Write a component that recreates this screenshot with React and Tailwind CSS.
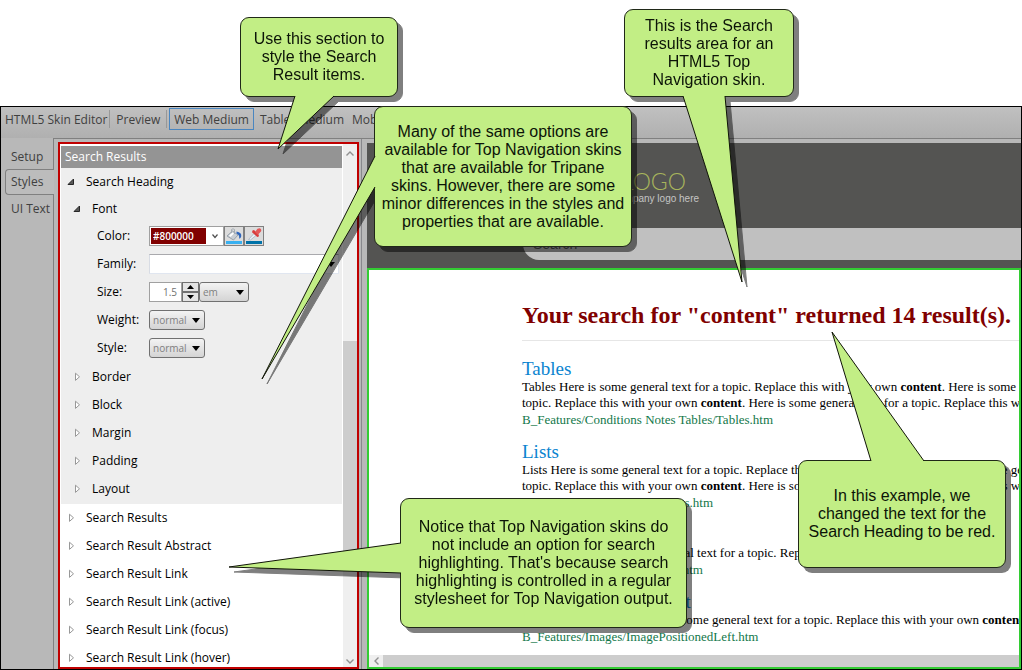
import React from "react";

const TREE_BOTTOM = [
  "Search Results",
  "Search Result Abstract",
  "Search Result Link",
  "Search Result Link (active)",
  "Search Result Link (focus)",
  "Search Result Link (hover)",
];

const FONT_SIBLINGS = ["Border", "Block", "Margin", "Padding", "Layout"];

function Expanded() {
  return (
    <svg width="8" height="8" viewBox="0 0 8 8" className="shrink-0" aria-hidden="true">
      <path d="M6.5 1 L6.5 6.5 L1 6.5 Z" fill="#595959" stroke="#262626" strokeWidth="1" />
    </svg>
  );
}

function Collapsed() {
  return (
    <svg width="8" height="10" viewBox="0 0 8 10" className="shrink-0" aria-hidden="true">
      <path d="M2.5 1.2 L6.5 4.8 L2.5 8.4 Z" fill="#fff" stroke="#989898" strokeWidth="1" />
    </svg>
  );
}

function TreeRow({ label, nested, open }) {
  return (
    <button
      type="button"
      aria-expanded={!!open}
      className={
        "flex w-full shrink-0 items-center gap-[11px] text-left " +
        (open ? "h-[27px] " : "h-7 ") +
        (nested ? "pl-3" : "pl-1.5")
      }
    >
      {open ? <Expanded /> : <Collapsed />}
      <span>{label}</span>
    </button>
  );
}

function Caret({ className }) {
  return (
    <svg
      width="8"
      height="5"
      viewBox="0 0 8 5"
      aria-hidden="true"
      className={"pointer-events-none absolute top-2 " + className}
    >
      <path d="M0 0 H8 L4 5 Z" fill="#000" />
    </svg>
  );
}

function SmallSelect({ id, label, value, className }) {
  return (
    <span className={"relative inline-flex h-5 " + className}>
      <select
        id={id}
        aria-label={label}
        defaultValue={value}
        className="h-full w-full appearance-none rounded-[3px] border border-[#707070] bg-linear-to-b from-[#f3f3f3] to-[#d4d4d4] pl-[3px] text-[10px] leading-none text-[#808080]"
      >
        <option>{value}</option>
      </select>
      <Caret className="right-[5px]" />
    </span>
  );
}

function Field({ label, id, children }) {
  return (
    <div className="flex h-7 items-center pl-[36px]">
      <label htmlFor={id} className="w-[52px] shrink-0">
        {label}
      </label>
      {children}
    </div>
  );
}

function StylesPanel() {
  return (
    <section className="mt-[3px] flex w-[301px] shrink-0 border-2 border-[#c00000] bg-white text-[12px] text-black">
      <div className="flex min-w-0 flex-1 flex-col overflow-hidden pt-0.5 pl-px">
        <h2 className="h-[22px] shrink-0 bg-[#949494] pl-1 leading-[22px] text-white">Search Results</h2>
        <div className="shrink-0 bg-[#eeeeee] pb-px">
          <TreeRow label="Search Heading" open />
          <TreeRow label="Font" open nested />
          <Field label="Color:" id="color">
            <span className="flex h-5 w-[75px] items-center border border-[#a0a0a0] bg-white pl-px">
              <input
                id="color"
                defaultValue="#800000"
                className="h-4 w-[55px] bg-[#800000] pl-0.5 text-[10px] leading-4 font-semibold text-white"
              />
              <button type="button" aria-label="Pick colour" className="flex flex-1 justify-center">
                <svg width="6" height="5" viewBox="0 0 6 5" aria-hidden="true">
                  <path d="M0.5 0.5 L3 3.5 L5.5 0.5" fill="none" stroke="#505050" strokeWidth="1.2" />
                </svg>
              </button>
            </span>
            <button type="button" aria-label="Fill" className="flex size-5 items-center justify-center border border-[#808080] bg-[#dcdcdc]">
              <svg width="16" height="16" viewBox="0 0 16 16" aria-hidden="true">
                <path d="M1 8 L6.5 3 L12 7 L7.5 12 Z" fill="#c9ced4" stroke="#98a2ac" strokeWidth="1" />
                <path d="M3 7.5 L6.5 4.5 L8 5.5 L4.5 9 Z" fill="#fff" />
                <path d="M5.5 5 L5.5 1.5 Q7 0 8.5 1.5 L8.5 6" fill="none" stroke="#a4acb4" strokeWidth="1" />
                <path d="M10.5 3.5 Q16 4.5 15.2 8.5 Q14.5 11 13 10.5 Q14 7 10.5 5.5 Z" fill="#2f66bc" />
                <path d="M0 13 H16 V16 H0 Z" fill="#38b0f0" />
              </svg>
            </button>
            <button type="button" aria-label="Eyedropper" className="flex size-5 items-center justify-center border border-[#808080] bg-[#dcdcdc]">
              <svg width="16" height="16" viewBox="0 0 16 16" aria-hidden="true">
                <path d="M2.5 11.5 L8 5.5 L10 7.5 L4.5 12 Z" fill="#e8f0f6" stroke="#a8b4c0" strokeWidth="0.8" />
                <path d="M6.5 2.5 L8 2 L13 7 L12.5 8.8 L11.3 9 L6 4.2 Z" fill="#d83c3c" />
                <path d="M9 4 L11.5 0.8 Q14 -0.5 15 1.2 Q15.8 3 14.5 4 L11.8 6.8 Z" fill="#e45858" />
                <path d="M0 13 H16 V16 H0 Z" fill="#0072a8" />
              </svg>
            </button>
          </Field>
          <Field label="Family:" id="family">
            <span className="relative flex h-5 w-[190px]">
              <select
                id="family"
                defaultValue=""
                className="h-full w-full appearance-none border border-t-[#a9a9ad] border-r-[#e0e6f0] border-b-[#e0e6f0] border-l-[#d8dce4] bg-white"
              >
                <option></option>
              </select>
              <Caret className="right-1" />
            </span>
          </Field>
          <Field label="Size:" id="size">
            <input
              id="size"
              defaultValue="1.5"
              className="h-5 w-[33px] border border-[#a0a0a0] bg-white pr-1 text-right text-[10px] text-[#707070]"
            />
            <span className="flex h-5 w-[17px] flex-col">
              <button type="button" aria-label="Increase" className="flex h-2.5 items-center justify-center border border-[#707070] bg-[#e4e4e4]">
                <svg width="7" height="4" viewBox="0 0 7 4" aria-hidden="true"><path d="M0 4 L3.5 0 L7 4 Z" /></svg>
              </button>
              <button type="button" aria-label="Decrease" className="flex h-2.5 items-center justify-center border border-[#707070] bg-[#e4e4e4]">
                <svg width="7" height="4" viewBox="0 0 7 4" aria-hidden="true"><path d="M0 0 L3.5 4 L7 0 Z" /></svg>
              </button>
            </span>
            <SmallSelect label="Unit" value="em" className="w-[50px]" />
          </Field>
          <Field label="Weight:" id="weight">
            <SmallSelect id="weight" value="normal" className="w-14" />
          </Field>
          <Field label="Style:" id="style">
            <SmallSelect id="style" value="normal" className="w-14" />
          </Field>
          <div className="pt-px">
            {FONT_SIBLINGS.map((t) => (
              <TreeRow key={t} label={t} nested />
            ))}
          </div>
        </div>
        {TREE_BOTTOM.map((t) => (
          <TreeRow key={t} label={t} />
        ))}
      </div>
      <div className="ml-px flex w-[14px] shrink-0 flex-col items-center bg-[#efefef]">
        <div className="flex h-[197px] w-full justify-center pt-[7px]">
          <svg width="8" height="5" viewBox="0 0 8 5" aria-hidden="true">
            <path d="M0.5 4.5 L4 1 L7.5 4.5" fill="none" stroke="#909090" strokeWidth="1.4" />
          </svg>
        </div>
        <div className="h-[220px] w-full bg-[#cdcdcd]" />
        <div className="flex w-full flex-1 items-end justify-center pb-[3px]">
          <svg width="8" height="5" viewBox="0 0 8 5" aria-hidden="true">
            <path d="M0.5 0.5 L4 4 L7.5 0.5" fill="none" stroke="#909090" strokeWidth="1.4" />
          </svg>
        </div>
      </div>
    </section>
  );
}

const B = () => <b>content</b>;

function Result({ title, path, children }) {
  return (
    <article className="mb-3.5 w-[620px]">
      <h3 className="text-[19px] leading-5 text-[#0a84d0]">
        <a href="#result">{title}</a>
      </h3>
      <p className="text-[13px] leading-4 whitespace-nowrap text-black">{children}</p>
      <p className="text-[13px] leading-[17px] text-[#12774a]">{path}</p>
    </article>
  );
}

function Preview() {
  return (
    <main className="mt-1 flex min-w-0 flex-1 flex-col">
      <header className="flex h-[125px] shrink-0 flex-col bg-[#545452]">
        <div className="flex h-[85px] flex-col pt-[26px] pl-[247px] font-[Lato,sans-serif]">
          <span className="pl-2 text-[23px] leading-6 font-light text-[#a8b45c]">LOGO</span>
          <span className="self-start font-['Liberation_Sans',sans-serif] text-[10px] leading-3 whitespace-nowrap text-[#c4c4c4]">
            company logo here
          </span>
        </div>
        <div className="ml-[156px]">
          <input
            aria-label="Search"
            placeholder="Search"
            className="block h-8 w-full rounded-l-[16px] bg-[#c0c0c0] pl-2.5 font-['Liberation_Sans',sans-serif] text-[14px] placeholder:text-[#555]"
          />
        </div>
      </header>
      <div className="flex min-h-0 flex-1 flex-col border-2 border-[#33cc33] bg-white">
        <div className="min-h-0 flex-1 overflow-hidden pt-7 pl-[153px] font-['Liberation_Serif',serif]">
          <h1 className="border-b border-[#e6e6e6] pb-2 text-[24px] leading-[34px] font-bold whitespace-nowrap text-[#800000]">
            Your search for "content" returned 14 result(s).
          </h1>
          <div className="pt-[18px]">
            <Result title="Tables" path="B_Features/Conditions Notes Tables/Tables.htm">
              Tables Here is some general text for a topic. Replace this with your own <B />. Here is some general text for a
              <br />
              topic. Replace this with your own <B />. Here is some general text for a topic. Replace this with your own
            </Result>
            <Result title="Lists" path="B_Features/Lists and Lists/Lists.htm">
              Lists Here is some general text for a topic. Replace this with your own <B />. Here is some general text for a
              <br />
              topic. Replace this with your own <B />. Here is some general text for a topic. Replace this with your own
            </Result>
            <Result title="Slideshows" path="B_Features/Slides/Slideshows.htm">
              Slideshows Here is some general text for a topic. Replace this with your own
            </Result>
            <Result title="Image Positioned Left" path="B_Features/Images/ImagePositionedLeft.htm">
              Image Positioned Left Here is some general text for a topic. Replace this with your own <B />.
            </Result>
          </div>
        </div>
        <div className="flex h-3 shrink-0 bg-[#cdcdcd]">
          <div className="flex w-[14px] items-center justify-center bg-[#efefef]">
            <svg width="5" height="8" viewBox="0 0 5 8" aria-hidden="true">
              <path d="M4.5 0.5 L1 4 L4.5 7.5" fill="none" stroke="#909090" strokeWidth="1.4" />
            </svg>
          </div>
        </div>
      </div>
    </main>
  );
}

function Callout({ className, tail, tailShadow = true, children }) {
  const filter = " drop-shadow-[5px_5px_0_rgba(0,0,0,0.5)]";
  return (
    <aside className={"absolute " + className + (tailShadow ? filter : "")}>
      <div
        className={
          "flex h-full w-full items-center justify-center rounded-[9px] border border-[#202818] bg-[#c2ee85] text-center text-[16px] leading-[18px] whitespace-nowrap text-[#0c1408]" +
          (tailShadow ? "" : " shadow-[5px_5px_0_rgba(0,0,0,0.5)]")
        }
      >
        <p>{children}</p>
      </div>
      <svg width="1" height="1" className="absolute top-0 left-0 overflow-visible" aria-hidden="true">
        <path d={tail} fill="#c2ee85" stroke="#101408" strokeWidth="1" />
      </svg>
    </aside>
  );
}

function MenuItem({ children, className = "" }) {
  return (
    <button type="button" className={"h-[22px] shrink-0 pt-px whitespace-nowrap " + className}>
      {children}
    </button>
  );
}

export default function App() {
  return (
    <div className="relative flex h-screen flex-col overflow-hidden bg-white pt-[106px] font-['Open_Sans',sans-serif]">
      <div className="flex min-h-0 flex-1 flex-col border border-black bg-[#b8b8b8] text-[12px] text-[#404040]">
        <nav className="flex h-[31px] shrink-0 items-start overflow-hidden bg-linear-to-b from-[#c0c0c0] to-[#b0b0b0] pt-px pl-1">
          <MenuItem>HTML5 Skin Editor</MenuItem>
          <span className="mt-0.5 ml-0.5 h-[18px] w-px shrink-0 bg-[#989898]" />
          <MenuItem className="ml-1.5">Preview</MenuItem>
          <span className="mt-0.5 ml-1.5 h-[18px] w-px shrink-0 bg-[#989898]" />
          <MenuItem className="ml-0.5 border border-[#4a86c0] px-1">Web Medium</MenuItem>
          <MenuItem className="ml-1.5">Tablet Medium</MenuItem>
          <MenuItem className="ml-2">Mobile Medium</MenuItem>
        </nav>
        <div className="flex min-h-0 flex-1">
          <div className="flex w-[53px] shrink-0 flex-col">
            <button type="button" className="h-[31px] border-r border-[#808080] pt-1.5 pl-2.5 text-left">Setup</button>
            <button type="button" className="ml-1 h-[26px] rounded-l-[4px] border border-r-0 border-[#808080] bg-[#bcbcbc] pl-[5px] text-left">
              Styles
            </button>
            <button type="button" className="h-7 border-r border-[#808080] pl-2.5 text-left whitespace-nowrap">UI Text</button>
            <span className="flex-1 border-r border-[#808080]" />
          </div>
          <div className="flex min-w-0 flex-1 border-t border-[#808080] pl-1">
            <StylesPanel />
            <div className="flex w-2 shrink-0 pl-0.5">
              <span className="w-px bg-[#88888c]" />
            </div>
            <Preview />
          </div>
        </div>
      </div>

      <div className="font-['Liberation_Sans',sans-serif]">
        <Callout className="top-[17px] left-[240px] h-20 w-[158px]" tail="M55 79 L38 132 L94 79">
          Use this section to
          <br />
          style the Search
          <br />
          Result items.
        </Callout>
        <Callout className="top-[9px] left-[624px] h-[88px] w-[170px]" tail="M59 87 L118 273 L101 87">
          This is the Search
          <br />
          results area for an
          <br />
          HTML5 Top
          <br />
          Navigation skin.
        </Callout>
        <Callout className="top-[106px] left-[374px] h-[141px] w-[258px]" tail="M1 50 L-112 273 L1 81">
          Many of the same options are
          <br />
          available for Top Navigation skins
          <br />
          that are available for Tripane
          <br />
          skins. However, there are some
          <br />
          minor differences in the styles and
          <br />
          properties that are available.
        </Callout>
        <Callout className="top-[460px] left-[798px] h-[108px] w-[208px]" tail="M73 1 L34 -128 L126 1" tailShadow={false}>
          In this example, we
          <br />
          changed the text for the
          <br />
          Search Heading to be red.
        </Callout>
        <Callout className="top-[498px] left-[400px] h-[130px] w-[287px]" tail="M1 45 L-171 69 L1 75">
          Notice that Top Navigation skins do
          <br />
          not include an option for search
          <br />
          highlighting. That's because search
          <br />
          highlighting is controlled in a regular
          <br />
          stylesheet for Top Navigation output.
        </Callout>
      </div>
    </div>
  );
}
